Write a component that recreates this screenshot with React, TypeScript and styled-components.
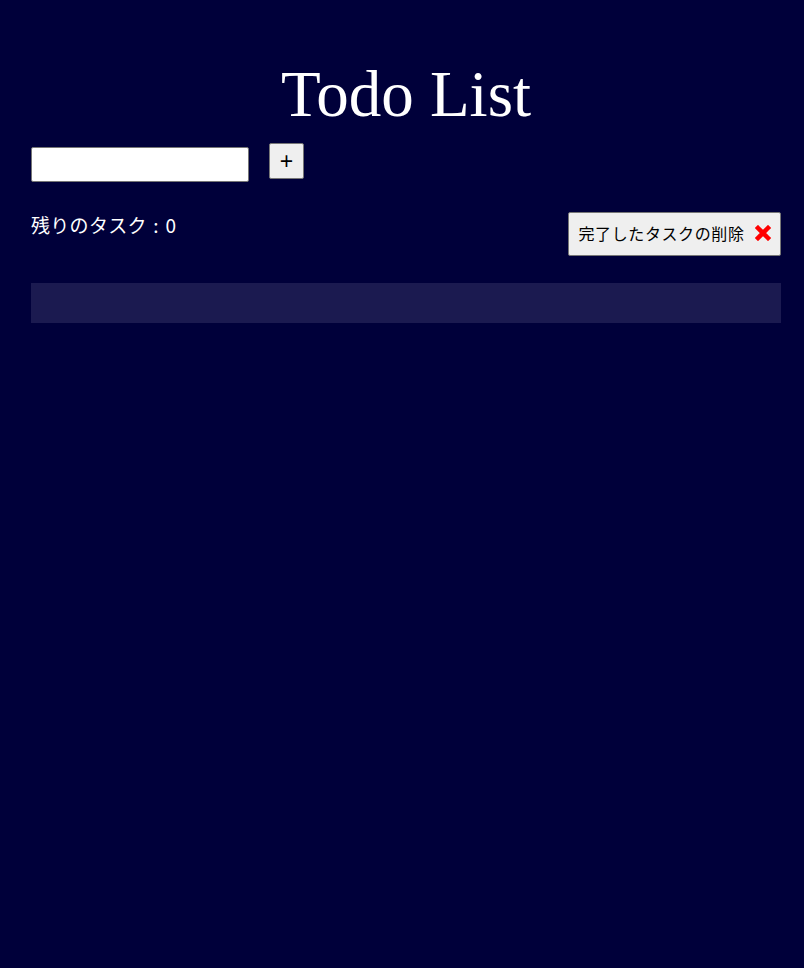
import React, { useState } from "react";
import styled, { createGlobalStyle } from "styled-components";

const Global = createGlobalStyle`
  html, body { margin: 0; padding: 0; background: #00003a; }
  body { font-family: "Noto Sans CJK JP", "Liberation Sans", sans-serif; }
`;

const Page = styled.div`
  min-height: 968px;
  background: #00003a;
  padding: 0 23px 0 31px;
  box-sizing: border-box;
  display: flex;
  flex-direction: column;
`;

const Title = styled.h1`
  margin: 52px 0 0;
  font-family: "Liberation Serif", "DejaVu Serif", serif;
  font-weight: 400;
  font-size: 65px;
  line-height: 84px;
  color: #ffffff;
  text-align: center;
  height: 80px;
`;

const Form = styled.div`
  display: flex;
  align-items: flex-start;
  gap: 20px;
  margin-top: 11px;
`;

const Input = styled.input`
  width: 218px;
  height: 35px;
  box-sizing: border-box;
  margin-top: 4px;
  border: 1px solid #767676;
  border-radius: 2px;
  background: #fff;
  font-size: 16px;
`;

const AddButton = styled.button`
  width: 35px;
  height: 36px;
  box-sizing: border-box;
  border: 1px solid #767676;
  border-radius: 2px;
  background: #efefef;
  font-family: "Liberation Sans", sans-serif;
  font-size: 23px;
  font-weight: 400;
  line-height: 1;
  padding: 0;
  color: #000;
`;

const StatusRow = styled.div`
  display: flex;
  justify-content: space-between;
  align-items: flex-start;
  margin-top: 30px;
`;

const Remaining = styled.span`
  color: #fff;
  font-size: 19px;
  line-height: 24px;
  margin-top: 1px;
  letter-spacing: 0.3px;
  word-spacing: 2px;
  font-family: "Noto Sans CJK JP", sans-serif;
`;

const DeleteButton = styled.button`
  width: 213px;
  height: 44px;
  box-sizing: border-box;
  border: 1px solid #767676;
  border-radius: 2px;
  background: #efefef;
  color: #000;
  font-family: "Noto Sans CJK JP", sans-serif;
  font-size: 16px;
  letter-spacing: 0.6px;
  display: flex;
  align-items: center;
  justify-content: center;
  gap: 10px;
  padding: 0 0 2px;
`;

const List = styled.ul`
  margin: 27px 0 0;
  padding: 0;
  height: 40px;
  background: #1b1a50;
  list-style: none;
`;

const XIcon = () => (
  <svg width="16" height="16" viewBox="0 0 16 16">
    <path d="M3 3 L13 13 M13 3 L3 13" stroke="#ff0000" strokeWidth="4.5" strokeLinecap="square" />
  </svg>
);

export default function App() {
  const [text, setText] = useState("");
  return (
    <>
      <Global />
      <Page>
        <Title>Todo List</Title>
        <Form>
          <Input value={text} onChange={(e) => setText(e.target.value)} />
          <AddButton>+</AddButton>
        </Form>
        <StatusRow>
          <Remaining>残りのタスク : 0</Remaining>
          <DeleteButton>
            完了したタスクの削除
            <XIcon />
          </DeleteButton>
        </StatusRow>
        <List />
      </Page>
    </>
  );
}
